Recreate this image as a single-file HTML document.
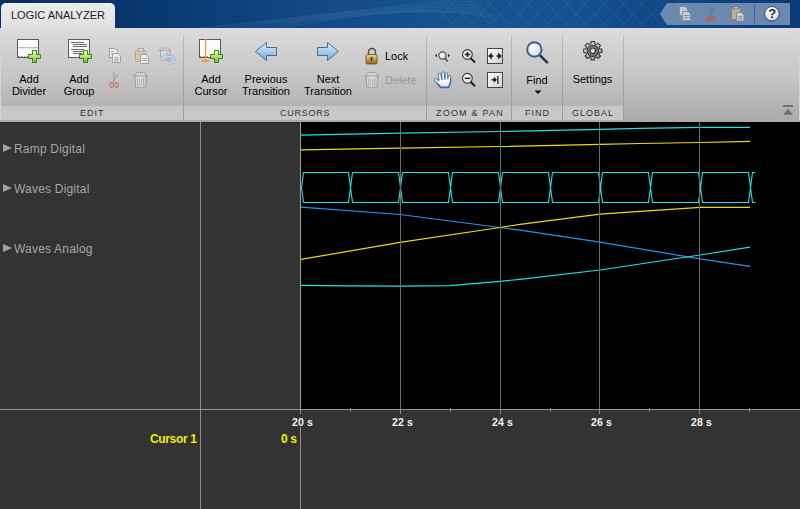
<!DOCTYPE html>
<html><head><meta charset="utf-8">
<style>
*{margin:0;padding:0;box-sizing:border-box}
html,body{width:800px;height:509px;overflow:hidden;background:#333;font-family:"Liberation Sans",sans-serif}
.abs{position:absolute}
#hdr{left:0;top:0;width:800px;height:28px;background:linear-gradient(90deg,#06305f 0%,#08366c 16%,#0c3f7b 28%,#134b8a 42%,#18528f 58%,#16508f 72%,#0f4583 85%,#0a3a74 100%)}
#tab{left:1px;top:3px;width:114px;height:26px;border-radius:5px 5px 0 0;background:linear-gradient(#ececec,#dfdfdf);border-top:1px solid #fafafa}
#tabtxt{left:11px;top:9px;font-size:11px;color:#222;letter-spacing:0px;white-space:nowrap}
#tb{left:0;top:28px;width:800px;height:94px;background:linear-gradient(#dcdcdc 0%,#c6c6c6 50%,#aaaaaa 100%)}
#lblrow{left:1px;top:106px;width:622px;height:14px;background:linear-gradient(#c6c6c6,#c8c8c8)}
#tbborder{left:0;top:122px;width:300px;height:1px;background:#2a2a2a}
.sep{width:1px;background:linear-gradient(#bdbdbd,#a2a2a2 60%,#9c9c9c);top:36px;height:84px}
.t{position:absolute;font-size:11px;color:#000;white-space:nowrap;line-height:12px;text-align:center}
.sl{position:absolute;font-size:9px;letter-spacing:1px;color:#333;white-space:nowrap;top:109px;line-height:9px}
.lbl{position:absolute;font-size:12px;color:#a6a6a6;white-space:nowrap;line-height:14px;letter-spacing:0.2px}
.tri{position:absolute;width:0;height:0;border-top:4.5px solid transparent;border-bottom:4.5px solid transparent;border-left:9px solid #a0a0a0}
.ax{position:absolute;font-size:10.5px;font-weight:bold;color:#f2f2f2;letter-spacing:0.1px;white-space:nowrap;top:416px;line-height:12px}
</style></head><body>
<div id="hdr" class="abs"></div>
<svg class="abs" style="left:0;top:0" width="800" height="28">
<g stroke="#9cc0ee" stroke-width="0.7" opacity="0.17" fill="none">
<path d="M430,28 L456,0 M449,28 L475,0 M468,28 L494,0 M487,28 L513,0 M506,28 L532,0 M525,28 L551,0 M544,28 L570,0 M563,28 L589,0 M582,28 L608,0 M601,28 L627,0 M620,28 L646,0 M639,28 L665,0 M658,28 L684,0 M677,28 L703,0"/>
<path d="M456,28 L430,0 M475,28 L449,0 M494,28 L468,0 M513,28 L487,0 M532,28 L506,0 M551,28 L525,0 M570,28 L544,0 M589,28 L563,0 M608,28 L582,0 M627,28 L601,0 M646,28 L620,0 M665,28 L639,0 M684,28 L658,0 M703,28 L677,0"/>
<path d="M200,28 Q380,8 470,-2 M212,28 Q386,7 474,1 M224,28 Q392,6 478,4 M236,28 Q398,5 482,7 M248,28 Q404,4 486,10 M260,28 Q410,3 490,13 M272,28 Q416,2 494,16 M284,28 Q422,1 498,19"/>
</g>
<path d="M659.8,14 L667,3 H790 V25 H667 Z" fill="#6b89ae"/>
<rect x="754" y="5" width="1" height="18" fill="#44628a"/>
<!-- qa copy -->
<path d="M679.5,6.5 h5.5 l2.5,2.5 v6.5 h-8 z" fill="#c4ccd6" stroke="#8a9099"/>
<path d="M682.5,11.5 h5.5 l2.5,2.5 v6.5 h-8 z" fill="#c4ccd6" stroke="#8a9099"/>
<path d="M684,15.5 h5 M684,17.5 h5" stroke="#8a9099"/>
<!-- qa scissors -->
<path d="M710.5,6.5 v9 M714.5,7.4 l-4.8,8.3" stroke="#5f6f82" stroke-width="0.9"/>
<ellipse cx="708" cy="18.8" rx="1.7" ry="2.3" fill="none" stroke="#c4505a" stroke-width="1.1"/>
<ellipse cx="712.7" cy="18.8" rx="1.7" ry="2.3" fill="none" stroke="#c4505a" stroke-width="1.1"/>
<!-- qa paste -->
<rect x="731.5" y="8.5" width="9" height="11" rx="1" fill="#b8b0a4" stroke="#8a8478"/>
<rect x="734" y="6.5" width="4" height="2.5" fill="#c8ccd0" stroke="#7a8088"/>
<path d="M736.5,12.5 h5 l2.5,2.5 v6 h-7.5 z" fill="#c4ccd6" stroke="#8a9099"/>
<path d="M738,16.5 h4.5 M738,18.5 h4.5" stroke="#8a9099"/>
<!-- help -->
<circle cx="772" cy="13.8" r="7.3" fill="url(#ghelp)" stroke="#23405e" stroke-width="0.9"/>
<text x="772.2" y="18.3" font-family="Liberation Sans" font-weight="bold" font-size="13" fill="#1c2636" text-anchor="middle">?</text>
<defs><radialGradient id="ghelp" cx="0.4" cy="0.3" r="0.75"><stop offset="0" stop-color="#ffffff"/><stop offset="0.7" stop-color="#e8e8e8"/><stop offset="1" stop-color="#a8b0bc"/></radialGradient></defs>
</svg>
<div id="tb" class="abs"></div>
<div id="lblrow" class="abs"></div>

<div class="abs" style="left:0;top:28px;width:1px;height:92px;background:#d4d4d4"></div>
<div class="abs" style="left:799px;top:28px;width:1px;height:92px;background:#d4d4d4"></div>
<div id="tab" class="abs"></div>
<div id="tabtxt" class="abs">LOGIC ANALYZER</div>

<svg class="abs" style="left:0;top:0" width="800" height="122">
<defs>
<linearGradient id="gp" x1="0" y1="0" x2="0" y2="1"><stop offset="0" stop-color="#eefad2"/><stop offset="0.5" stop-color="#b4e26e"/><stop offset="1" stop-color="#70bc30"/></linearGradient>
<linearGradient id="gpaper" x1="0" y1="0" x2="1" y2="1"><stop offset="0" stop-color="#ffffff"/><stop offset="0.7" stop-color="#f6f6f6"/><stop offset="1" stop-color="#dcdcdc"/></linearGradient>
<linearGradient id="garr" x1="0" y1="0" x2="0" y2="1"><stop offset="0" stop-color="#e4f1fb"/><stop offset="0.5" stop-color="#a9cdea"/><stop offset="1" stop-color="#76a9d4"/></linearGradient>
<linearGradient id="glock" x1="0" y1="0" x2="0" y2="1"><stop offset="0" stop-color="#f3dc90"/><stop offset="0.5" stop-color="#c9a040"/><stop offset="1" stop-color="#8a6420"/></linearGradient>
<radialGradient id="glens" cx="0.4" cy="0.4" r="0.6"><stop offset="0" stop-color="#ffffff"/><stop offset="1" stop-color="#c8dceb"/></radialGradient>
<linearGradient id="ghand" x1="0" y1="0" x2="0" y2="1"><stop offset="0" stop-color="#ffffff"/><stop offset="1" stop-color="#d6e2ee"/></linearGradient>
<linearGradient id="gbox" x1="0" y1="0" x2="1" y2="1"><stop offset="0" stop-color="#ffffff"/><stop offset="1" stop-color="#d0d0d0"/></linearGradient>
<radialGradient id="ggear" cx="0.35" cy="0.3" r="0.75"><stop offset="0" stop-color="#ffffff"/><stop offset="0.6" stop-color="#d0d0d0"/><stop offset="1" stop-color="#8c8c8c"/></radialGradient>
<g id="trash">
<path d="M134.8,75.8 h11.8 l-0.9,11.5 h-10 z" fill="url(#gtrash)" stroke="#9a9a9a" stroke-width="0.9"/>
<path d="M137.6,78.5 v7.5 M139.6,78.5 v7.5 M141.6,78.5 v7.5 M143.6,78.5 v7.5" stroke="#a6a6a6" stroke-width="0.9"/>
<path d="M133.2,75.9 L137.4,72.6 H143.6 L147.6,75.9 Z" fill="#d6d6d6" stroke="#9a9a9a" stroke-width="0.9" stroke-linejoin="round"/>
</g>
<linearGradient id="gtrash" x1="0" y1="0" x2="1" y2="0"><stop offset="0" stop-color="#cfcfcf"/><stop offset="0.5" stop-color="#e6e6e6"/><stop offset="1" stop-color="#c4c4c4"/></linearGradient>
<g id="plus"><path d="M4.5,0.5 h4 v4 h4 v4 h-4 v4 h-4 v-4 h-4 v-4 h4 z" fill="url(#gp)" stroke="#3d7f1c" stroke-width="1"/></g>
</defs>
<!-- Add Divider -->
<rect x="17.5" y="39.5" width="21" height="18" fill="url(#gpaper)" stroke="#5a5a5a"/>
<rect x="18" y="47" width="20" height="1.3" fill="#bdbdbd"/>
<path d="M19,57.5 v-1.5 M22,57.5 v-1.5 M25,57.5 v-1.5 M28,57.5 v-1.5" stroke="#5a5a5a" stroke-width="1"/>
<use href="#plus" x="28" y="50"/>
<!-- Add Group -->
<rect x="68.5" y="39.5" width="21" height="18" fill="url(#gpaper)" stroke="#5a5a5a"/>
<g stroke="#6a6a6a" stroke-width="1"><path d="M71,42.5 h13 M73,44.5 h14 M73,46.5 h14 M71,49.5 h13 M73,51.5 h11 M73,53.5 h9"/></g>
<use href="#plus" x="79" y="50"/>
<!-- disabled copy -->
<g id="copyi">
<path d="M109.5,48.5 h5.5 l2.5,2.5 v6.5 h-8 z" fill="#ededed" stroke="#a0a0a0"/>
<path d="M111,51.5 h3 M111,53.5 h3" stroke="#b0b0b0"/>
<path d="M112.5,53.5 h5.5 l2.5,2.5 v6.5 h-8 z" fill="#ededed" stroke="#a0a0a0"/>
<path d="M114,57.5 h5 M114,59.5 h5 M114,61 h5" stroke="#a8a8a8"/>
</g>
<!-- paste -->
<rect x="135.5" y="50.5" width="10" height="11" rx="1" fill="#d9c6aa" stroke="#b8a488"/>
<rect x="138.5" y="48.5" width="5" height="2.5" fill="#ececec" stroke="#a0a0a0"/>
<path d="M140.5,54.5 h5.5 l2.5,2.5 v6.5 h-8 z" fill="#ededed" stroke="#a0a0a0"/>
<path d="M142,58.5 h5 M142,60.5 h5" stroke="#a8a8a8"/>
<!-- trash undo -->
<path d="M160.3,50.6 h9.8 l-0.7,9.6 h-8.4 z" fill="url(#gtrash)" stroke="#a4a4a4" stroke-width="0.9"/>
<path d="M159,50.6 L162.6,48.2 H167.8 L171.2,50.6 Z" fill="#dadada" stroke="#a4a4a4" stroke-width="0.9" stroke-linejoin="round"/>
<path d="M165.5,56.5 H170.5 A3.2,3.2 0 0 1 170.5,62.9 H168.5" fill="none" stroke="#92aecb" stroke-width="3.4"/>
<path d="M162.2,56.5 L166.8,52.6 V60.4 Z" fill="#c6dbef" stroke="#92aecb" stroke-width="0.9" stroke-linejoin="round"/>
<path d="M166,56.5 H170.5 A3.2,3.2 0 0 1 170.5,62.9 H168.5" fill="none" stroke="#c6dbef" stroke-width="1.6"/>
<!-- scissors -->
<g opacity="0.8">
<path d="M114,72.2 v9.5 M118,74 l-4.8,8.2" stroke="#8a8a8a" stroke-width="0.9"/>
<ellipse cx="111.8" cy="84.7" rx="1.7" ry="2.4" fill="none" stroke="#d45a5a" stroke-width="1.1"/>
<ellipse cx="116.7" cy="85" rx="1.7" ry="2.4" fill="none" stroke="#d45a5a" stroke-width="1.1"/>
</g>
<!-- trash -->
<use href="#trash" x="0" y="0"/>
<!-- Add Cursor -->
<rect x="199.5" y="39.5" width="21" height="18" fill="url(#gpaper)" stroke="#5a5a5a"/>
<path d="M201,57.5 v-1.5 M204,57.5 v-1.5 M207,57.5 v-1.5" stroke="#5a5a5a"/>
<rect x="205" y="39" width="1.2" height="22" fill="#f0a020"/>
<rect x="202" y="60" width="7" height="2" fill="#f0a020"/>
<use href="#plus" x="210" y="50"/>
<!-- prev arrow -->
<path d="M255.5,51.5 L266.5,42.5 V47.5 H276.5 V55.5 H266.5 V60.5 Z" fill="url(#garr)" stroke="#3c6e9e" stroke-width="1" stroke-linejoin="round"/>
<!-- next arrow -->
<path d="M338.5,51.5 L327.5,42.5 V47.5 H317.5 V55.5 H327.5 V60.5 Z" fill="url(#garr)" stroke="#3c6e9e" stroke-width="1" stroke-linejoin="round"/>
<!-- lock -->
<path d="M368.5,55 v-3 a3.5,3.5 0 0 1 7,0 v3" fill="none" stroke="#4a4a4a" stroke-width="1.4"/>
<rect x="366" y="54.5" width="11" height="9.5" rx="1.5" fill="url(#glock)" stroke="#6a4a10" stroke-width="0.8"/>
<path d="M371.5,58 v3" stroke="#222" stroke-width="1.2"/><circle cx="371.5" cy="58" r="1" fill="#222"/>
<!-- delete trash disabled -->
<use href="#trash" x="231.2" y="0"/>
<!-- zoom X -->
<path d="M435,55.5 l2,-2 v4 z M450,55.5 l-2,-2 v4 z" fill="#333"/>
<circle cx="442.5" cy="55.5" r="3.6" fill="url(#glens)" stroke="#555" stroke-width="1.2"/>
<path d="M445,58 l2.5,3.5" stroke="#444" stroke-width="1.5"/>
<!-- zoom in -->
<circle cx="467.4" cy="54.5" r="4.9" fill="url(#glens)" stroke="#3a3a3a" stroke-width="1.1"/>
<path d="M470.5,58 l4.5,4.5" stroke="#222" stroke-width="2"/>
<path d="M464.8,54.5 h5.2 M467.4,51.9 v5.2" stroke="#111" stroke-width="1.4"/>
<!-- fit box -->
<rect x="487.5" y="48.5" width="15" height="15" fill="url(#gbox)" stroke="#444"/>
<path d="M488.2,56 L491.8,52.6 V59.4 Z M501.8,56 L498.2,52.6 V59.4 Z" fill="#1a1a1a"/>
<path d="M491,56 h2.5 M496.5,56 h2.5" stroke="#1a1a1a" stroke-width="1.6"/>
<!-- hand -->
<g stroke="#3a6a9c" stroke-linecap="round" fill="none">
<path d="M439.6,74.3 L440.6,81 M443,73.2 L443.4,80 M446.4,74.2 L446.4,80 M449.6,76.6 L449,81 M435.8,79.8 L439.5,83.5" stroke-width="3.3"/>
<path d="M438.5,80 L450.8,78.5 L450.6,83 L448.6,87.6 L440.6,87.6 L436.5,82.5 Z" fill="#3a6a9c" stroke-width="1.2" stroke-linejoin="round"/>
</g>
<g stroke="#ffffff" stroke-linecap="round" fill="none">
<path d="M439.6,74.3 L440.6,81 M443,73.2 L443.4,80 M446.4,74.2 L446.4,80 M449.6,76.6 L449,81 M435.8,79.8 L439.5,83.5" stroke-width="1.7"/>
<path d="M439,80.5 L449.8,79.2 L449.6,83 L447.9,86.6 L441.1,86.6 L437.6,82.6 Z" fill="url(#ghand)" stroke="none"/>
</g>
<!-- zoom out -->
<circle cx="467.4" cy="78.3" r="4.9" fill="url(#glens)" stroke="#3a3a3a" stroke-width="1.1"/>
<path d="M470.5,81.8 l4.5,4.5" stroke="#222" stroke-width="2"/>
<path d="M464.8,78.3 h5.2" stroke="#111" stroke-width="1.4"/>
<!-- box 2 -->
<rect x="487.5" y="72.5" width="15" height="15" fill="url(#gbox)" stroke="#444"/>
<path d="M497,79.8 L493.8,76.8 V82.8 Z" fill="#1a1a1a"/>
<path d="M491.5,79.8 h3" stroke="#1a1a1a" stroke-width="1.6"/>
<path d="M497.9,76 v8" stroke="#1a1a1a" stroke-width="1.2"/>
<!-- find -->
<path d="M539.5,54.8 l7.6,7.6" stroke="#1e3a5e" stroke-width="2.6" stroke-linecap="round"/>
<circle cx="534.4" cy="49.5" r="7.2" fill="url(#glens)" stroke="#37618c" stroke-width="1.9"/>
<ellipse cx="532" cy="47" rx="2.6" ry="1.8" fill="#ffffff" opacity="0.8" transform="rotate(-35 532 47)"/>
<path d="M534.5,90.5 h7 l-3.5,3.5 z" fill="#111"/>
<!-- gear -->
<g transform="translate(592.8,50.8)">
<path d="M-1.86,-6.95 L-1.77,-9.13 L1.77,-9.13 L1.86,-6.95 L3.60,-6.24 L5.20,-7.71 L7.71,-5.20 L6.24,-3.60 L6.95,-1.86 L9.13,-1.77 L9.13,1.77 L6.95,1.86 L6.24,3.60 L7.71,5.20 L5.20,7.71 L3.60,6.24 L1.86,6.95 L1.77,9.13 L-1.77,9.13 L-1.86,6.95 L-3.60,6.24 L-5.20,7.71 L-7.71,5.20 L-6.24,3.60 L-6.95,1.86 L-9.13,1.77 L-9.13,-1.77 L-6.95,-1.86 L-6.24,-3.60 L-7.71,-5.20 L-5.20,-7.71 L-3.60,-6.24 Z" fill="url(#ggear)" stroke="#3a3a3a" stroke-width="1.1" stroke-linejoin="round"/>
<circle r="5.7" fill="#8a8a8a" stroke="#3a3a3a" stroke-width="1.2"/>
<circle r="4.2" fill="none" stroke="#6a6a6a" stroke-width="1"/>
<circle r="2.8" fill="#b8b8b8" stroke="#3a3a3a" stroke-width="1.2"/>
<circle r="1.5" fill="#e8e8e8"/>
</g>
<!-- collapse -->
<rect x="783" y="105" width="10" height="2" fill="#707070"/>
<path d="M783,114.8 L788,108.8 L793,114.8 Z" fill="#707070"/>
</svg>
<div class="abs sep" style="left:183px"></div>
<div class="abs sep" style="left:426px"></div>
<div class="abs sep" style="left:511px"></div>
<div class="abs sep" style="left:562px"></div>
<div class="abs sep" style="left:623px"></div>

<!-- toolbar text -->
<div class="t" style="left:9px;top:73px;width:40px">Add<br>Divider</div>
<div class="t" style="left:59px;top:73px;width:40px">Add<br>Group</div>
<div class="t" style="left:191px;top:73px;width:40px">Add<br>Cursor</div>
<div class="t" style="left:236px;top:73px;width:60px">Previous<br>Transition</div>
<div class="t" style="left:298px;top:73px;width:60px">Next<br>Transition</div>
<div class="t" style="left:385px;top:50px;text-align:left">Lock</div>
<div class="t" style="left:385px;top:74px;text-align:left;color:#9a9a9a">Delete</div>
<div class="t" style="left:517px;top:74px;width:40px">Find</div>
<div class="t" style="left:562px;top:73px;width:61px">Settings</div>

<div class="sl" style="left:80px">EDIT</div>
<div class="sl" style="left:280px;letter-spacing:0.75px">CURSORS</div>
<div class="sl" style="left:436px;letter-spacing:1.2px">ZOOM &amp; PAN</div>
<div class="sl" style="left:525px">FIND</div>
<div class="sl" style="left:572px">GLOBAL</div>

<!-- dark area -->
<div class="abs" style="left:0;top:122px;width:800px;height:387px;background:#333"></div>
<div class="abs" style="left:0;top:122px;width:300px;height:1px;background:#2a2a2a"></div>
<div class="abs" style="left:301px;top:122px;width:499px;height:287px;background:#000"></div>
<div class="abs" style="left:200px;top:122px;width:1px;height:387px;background:#8a8a8a"></div>

<div class="tri" style="left:3px;top:143.5px"></div>
<div class="lbl" style="left:14px;top:142px">Ramp Digital</div>
<div class="tri" style="left:3px;top:183.5px"></div>
<div class="lbl" style="left:14px;top:182px">Waves Digital</div>
<div class="tri" style="left:3px;top:243.5px"></div>
<div class="lbl" style="left:14px;top:242px">Waves Analog</div>

<svg class="abs" style="left:0;top:0" width="800" height="509">
<path d="M301.5,187.5 L303.5,172.5 L348.5,172.5 L350.5,187.5 M301.5,187.5 L303.5,202.5 L348.5,202.5 L350.5,187.5 M350.5,187.5 L352.5,172.5 L398.5,172.5 L400.5,187.5 M350.5,187.5 L352.5,202.5 L398.5,202.5 L400.5,187.5 M400.5,187.5 L402.5,172.5 L448.5,172.5 L450.5,187.5 M400.5,187.5 L402.5,202.5 L448.5,202.5 L450.5,187.5 M450.5,187.5 L452.5,172.5 L498.5,172.5 L500.5,187.5 M450.5,187.5 L452.5,202.5 L498.5,202.5 L500.5,187.5 M500.5,187.5 L502.5,172.5 L548.5,172.5 L550.5,187.5 M500.5,187.5 L502.5,202.5 L548.5,202.5 L550.5,187.5 M550.5,187.5 L552.5,172.5 L598.5,172.5 L600.5,187.5 M550.5,187.5 L552.5,202.5 L598.5,202.5 L600.5,187.5 M600.5,187.5 L602.5,172.5 L648.5,172.5 L650.5,187.5 M600.5,187.5 L602.5,202.5 L648.5,202.5 L650.5,187.5 M650.5,187.5 L652.5,172.5 L698.5,172.5 L700.5,187.5 M650.5,187.5 L652.5,202.5 L698.5,202.5 L700.5,187.5 M700.5,187.5 L702.5,172.5 L748.5,172.5 L750.5,187.5 M700.5,187.5 L702.5,202.5 L748.5,202.5 L750.5,187.5 M750.5,187.5 L752.5,172.5 L755.5,172.5 M750.5,187.5 L752.5,202.5 L755.5,202.5" fill="none" stroke="#1ee3e3" stroke-width="1.1"/>
<polyline points="301,135.2 400,133.2 500,131.5 600,129.3 640,128.4 700,127.3 750,127.3" fill="none" stroke="#1ee3e3" stroke-width="1.2"/>
<polyline points="301,149.9 400,148.2 500,146.5 600,144.3 640,143.5 700,142.5 750,141.4" fill="none" stroke="#e6dc1c" stroke-width="1.2"/>
<polyline points="301,207.1 400,214.5 500,227.5 520,230.1 600,242.1 700,258.9 750,266.4" fill="none" stroke="#2a92ec" stroke-width="1.2"/>
<polyline points="301,259.4 400,242.4 500,227.5 520,224.4 600,214.2 700,207.3 750,207.3" fill="none" stroke="#e6dc1c" stroke-width="1.2"/>
<polyline points="301,285.3 350,285.8 400,286.1 450,285.6 500,281.3 520,279.3 600,270 700,255 750,247.2" fill="none" stroke="#1ee3e3" stroke-width="1.2"/>
<g fill="#6b6b6b">
<rect x="400" y="122" width="1" height="287"/><rect x="500" y="122" width="1" height="287"/>
<rect x="599" y="122" width="1" height="287"/><rect x="699" y="122" width="1" height="287"/>
</g>
<rect x="300" y="122" width="1" height="287" fill="#a0a0a0"/>
<g fill="#8a8a8a">
<rect x="300" y="409" width="1" height="5"/><rect x="300" y="427" width="1" height="82"/>
<rect x="400" y="409" width="1" height="5"/><rect x="500" y="409" width="1" height="5"/>
<rect x="599" y="409" width="1" height="5"/><rect x="699" y="409" width="1" height="5"/>
<rect x="0" y="409" width="800" height="1" fill="#959595"/>
<rect x="350" y="408" width="1" height="4"/><rect x="450" y="408" width="1" height="4"/>
<rect x="550" y="408" width="1" height="4"/><rect x="649" y="408" width="1" height="4"/>
<rect x="749" y="408" width="1" height="4"/>
<rect x="300" y="409" width="1" height="1" fill="#b0b0b0"/>
</g>
</svg>

<div class="ax" style="left:292px">20 s</div>
<div class="ax" style="left:392px">22 s</div>
<div class="ax" style="left:492px">24 s</div>
<div class="ax" style="left:591px">26 s</div>
<div class="ax" style="left:691px">28 s</div>

<div class="abs" style="left:150px;top:432px;font-size:12px;letter-spacing:-0.35px;font-weight:bold;color:#eeee00;white-space:nowrap">Cursor 1</div>
<div class="abs" style="left:281px;top:432px;font-size:12px;letter-spacing:-0.35px;font-weight:bold;color:#eeee00;white-space:nowrap">0 s</div>
</body></html>
